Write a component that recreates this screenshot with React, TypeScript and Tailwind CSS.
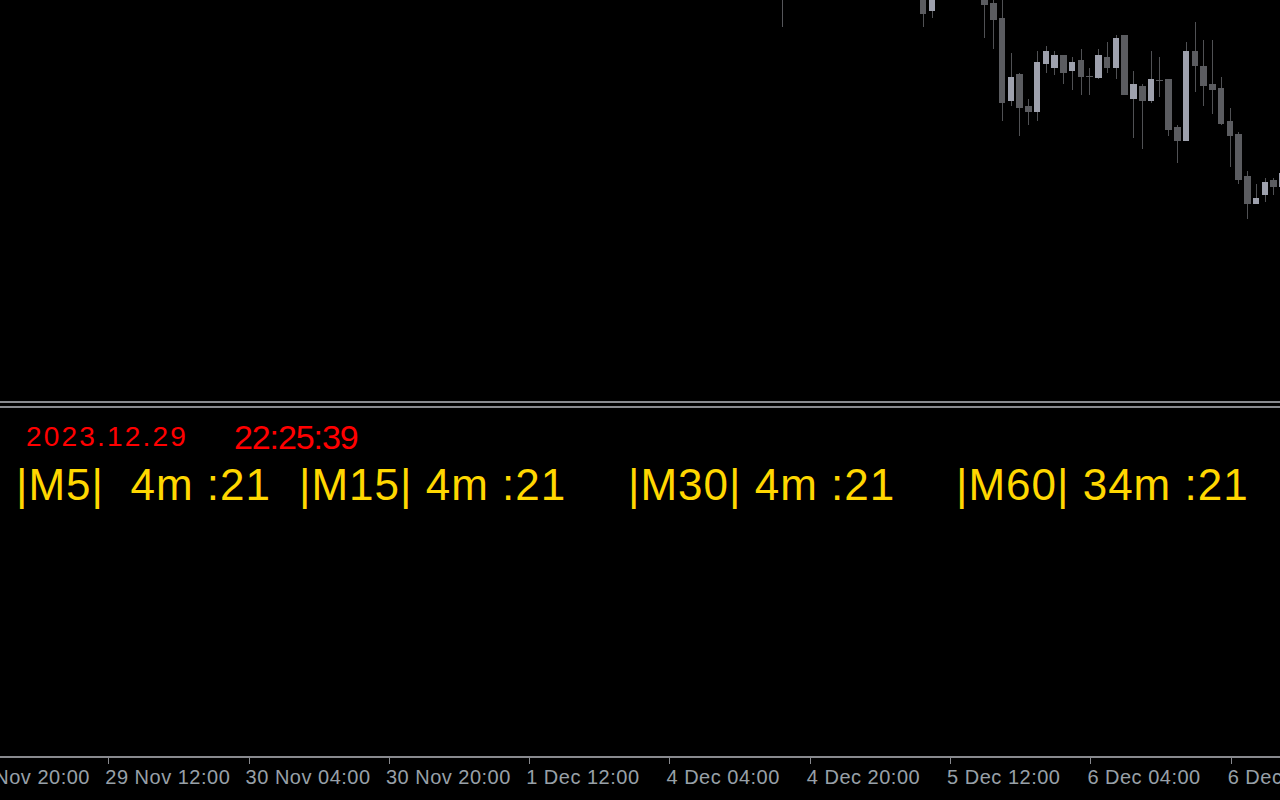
type Candle = [number, number, number, number, number, number, boolean]
// [bodyLeft, bodyWidth, wickTop, wickBottom, bodyTop, bodyBottom, bullish]

const candles: Candle[] = [
  [920, 6, 0, 27, 0, 14, false],
  [929, 6, 0, 18, 0, 11, true],
  [981, 7, 0, 38, 0, 5, false],
  [990, 7, 0, 49, 3, 20, false],
  [999, 6, 0, 121, 18, 103, false],
  [1008, 6, 53, 106, 77, 101, true],
  [1016, 7, 73, 136, 74, 108, false],
  [1025, 7, 99, 125, 106, 112, false],
  [1034, 6, 51, 121, 62, 112, true],
  [1043, 6, 46, 73, 51, 64, true],
  [1051, 7, 51, 75, 55, 68, true],
  [1060, 7, 55, 84, 55, 73, false],
  [1069, 6, 57, 90, 62, 71, true],
  [1078, 6, 49, 95, 60, 77, false],
  [1086, 7, 68, 95, 76, 77, false],
  [1095, 7, 49, 79, 55, 78, true],
  [1104, 6, 42, 73, 57, 68, false],
  [1113, 6, 35, 79, 38, 68, true],
  [1121, 7, 35, 95, 35, 95, false],
  [1130, 7, 71, 138, 84, 99, true],
  [1139, 7, 84, 149, 86, 101, false],
  [1148, 6, 51, 103, 79, 101, true],
  [1156, 7, 57, 97, 80, 81, false],
  [1165, 7, 79, 136, 79, 130, false],
  [1174, 7, 125, 163, 127, 141, false],
  [1183, 6, 42, 141, 51, 141, true],
  [1192, 6, 22, 92, 51, 66, false],
  [1200, 7, 40, 106, 66, 86, false],
  [1209, 7, 40, 114, 84, 90, false],
  [1218, 6, 77, 125, 88, 124, false],
  [1227, 6, 108, 167, 121, 136, false],
  [1235, 7, 132, 184, 134, 180, false],
  [1244, 7, 171, 219, 176, 204, false],
  [1253, 6, 184, 204, 198, 204, true],
  [1262, 6, 178, 202, 182, 195, true],
  [1270, 7, 178, 195, 180, 187, false],
  [1279, 3, 173, 190, 173, 187, true],
]

const timeframes = [
  { label: '|M5|  4m :21', width: 'w-[283px]' },
  { label: '|M15| 4m :21', width: 'w-[329px]' },
  { label: '|M30| 4m :21', width: 'w-[328px]' },
  { label: '|M60| 34m :21', width: 'w-[300px]' },
]

const axisLabels = [
  '28 Nov 20:00',
  '29 Nov 12:00',
  '30 Nov 04:00',
  '30 Nov 20:00',
  '1 Dec 12:00',
  '4 Dec 04:00',
  '4 Dec 20:00',
  '5 Dec 12:00',
  '6 Dec 04:00',
  '6 Dec 20:00',
]

function PriceChart() {
  return (
    <svg width="1280" height="401" viewBox="0 0 1280 401" className="block shrink-0" shapeRendering="crispEdges">
      <rect x={782} y={0} width={1} height={27} fill="#55565a" />
      {candles.map(([x, w, wt, wb, bt, bb, bull], i) => {
        const cx = x + Math.floor(w / 2)
        return (
          <g key={i}>
            <rect x={cx} y={wt} width={1} height={wb - wt} fill="#505154" />
            <rect x={x} y={bt} width={w} height={Math.max(1, bb - bt)} fill={bull ? '#9ea1ad' : '#5b5c60'} />
          </g>
        )
      })}
    </svg>
  )
}

export default function App() {
  return (
    <div className="flex h-[800px] w-[1280px] flex-col overflow-hidden bg-black font-['Liberation_Sans',Arial,sans-serif]">
      <PriceChart />
      <div className="h-[2px] shrink-0 bg-[#88898e]" />
      <div className="h-[3px] shrink-0" />
      <div className="h-[2px] shrink-0 bg-[#88898e]" />

      <div className="flex h-[348px] shrink-0 flex-col pt-[12px]">
        <div className="flex items-start pl-[26px]">
          <div className="mt-[3px] w-[208px] text-[28px] leading-[28px] tracking-[2.2px] text-[#ff0000]">2023.12.29</div>
          <div className="text-[34px] leading-[34px] tracking-[-1.1px] text-[#ff0000]">22:25:39</div>
        </div>
        <div className="mt-[9px] flex pl-[16px]">
          {timeframes.map((tf) => (
            <div
              key={tf.label}
              className={`${tf.width} shrink-0 whitespace-pre text-[44px] leading-[44px] tracking-[1px] text-[#ffd700]`}
            >
              {tf.label}
            </div>
          ))}
        </div>
      </div>

      <div className="h-[2px] shrink-0 bg-[#88898e]" />
      <div className="ml-[-32px] flex">
        {axisLabels.map((label) => (
          <div key={label} className="flex w-[140.3px] shrink-0 flex-col">
            <div className="h-[6px] w-px bg-[#88898e]" />
            <div className="ml-[-3px] mt-[3px] whitespace-pre text-[20px] leading-[20px] tracking-[0.5px] text-[#98a0a8]">
              {label}
            </div>
          </div>
        ))}
      </div>
    </div>
  )
}
